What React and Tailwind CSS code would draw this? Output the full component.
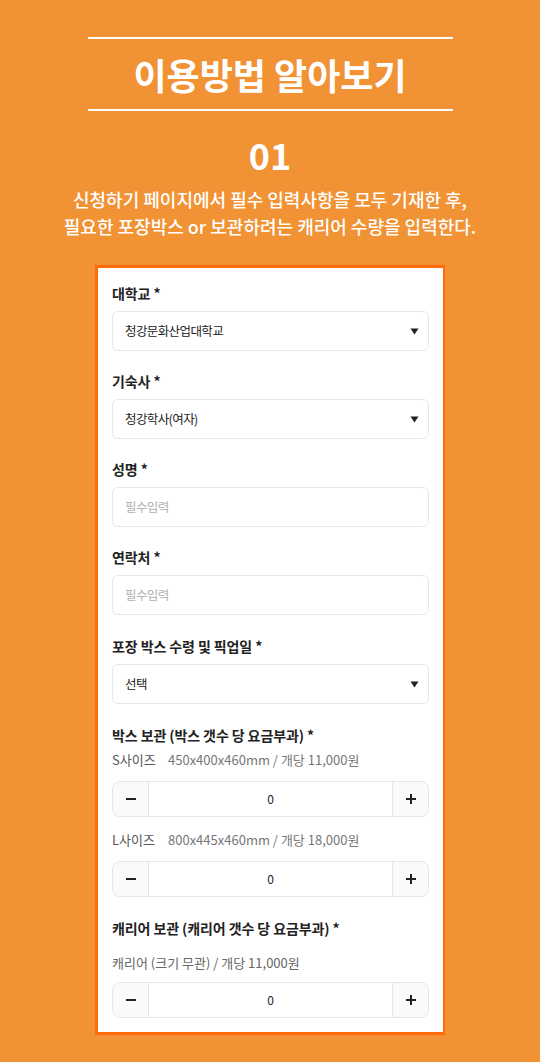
import React from "react";

const Caret = () => (
  <svg width="9" height="7" viewBox="0 0 9 7" className="shrink-0">
    <path d="M0.5 0.5 H8.5 L4.5 6.5 Z" fill="#222" />
  </svg>
);

const Label = ({ children }) => (
  <div className="text-[14px] leading-[20px] font-bold text-[#222] tracking-[-0.1px]">{children}</div>
);

const Select = ({ value }) => (
  <div className="mt-[8px] h-[40px] flex items-center justify-between pl-[12px] pr-[9px] border border-[#e6e6e6] rounded-[6px] bg-white">
    <span className="text-[12.5px] text-[#222] tracking-[-0.6px]">{value}</span>
    <Caret />
  </div>
);

const Input = () => (
  <div className="mt-[8px] h-[40px] flex items-center pl-[12px] border border-[#e6e6e6] rounded-[6px] bg-white">
    <span className="text-[12.5px] text-[#b0b0b0] tracking-[-0.6px]">필수입력</span>
  </div>
);

const Stepper = () => (
  <div className="h-[36px] flex border border-[#e6e6e6] rounded-[8px] overflow-hidden bg-white">
    <div className="w-[36px] bg-[#fafafa] border-r border-[#e6e6e6] flex items-center justify-center">
      <svg width="12" height="12" viewBox="0 0 12 12">
        <path d="M1 6 H11" stroke="#222" strokeWidth="2" />
      </svg>
    </div>
    <div className="flex-1 flex items-center justify-center text-[12px] text-[#222]">0</div>
    <div className="w-[36px] bg-[#fafafa] border-l border-[#e6e6e6] flex items-center justify-center">
      <svg width="12" height="12" viewBox="0 0 12 12">
        <path d="M1 6 H11 M6 1 V11" stroke="#222" strokeWidth="2" />
      </svg>
    </div>
  </div>
);

export default function App() {
  return (
    <div className="min-h-[1062px] bg-[#f19235] pt-[37px] pb-[28px] font-['Noto_Sans_CJK_KR','Noto_Sans',sans-serif]">
      <div className="mx-auto w-[365px] h-[2px] bg-white" />
      <h1 className="text-center text-white text-[36px] leading-[70px] font-bold">이용방법 알아보기</h1>
      <div className="mx-auto w-[365px] h-[2px] bg-white" />
      <div className="mt-[23px] text-center text-white text-[36px] leading-[40px] font-bold">01</div>
      <div className="mt-[12px] text-center text-white text-[18px] leading-[27px] font-medium">
        신청하기 페이지에서 필수 입력사항을 모두 기재한 후,
        <br />
        필요한 포장박스 or 보관하려는 캐리어 수량을 입력한다.
      </div>
      <div className="mx-auto mt-[25px] w-[350px] border-[3px] border-r-[2px] border-[#ff6a0a] bg-white px-[14px] pt-[15px] pb-[14px]">
        <Label>대학교 *</Label>
        <Select value="청강문화산업대학교" />
        <div className="mt-[20px]" />
        <Label>기숙사 *</Label>
        <Select value="청강학사(여자)" />
        <div className="mt-[20px]" />
        <Label>성명 *</Label>
        <Input />
        <div className="mt-[20px]" />
        <Label>연락처 *</Label>
        <Input />
        <div className="mt-[21px]" />
        <Label>포장 박스 수령 및 픽업일 *</Label>
        <Select value="선택" />
        <div className="mt-[21px]" />
        <Label>박스 보관 (박스 갯수 당 요금부과) *</Label>
        <div className="mt-[6px] flex text-[13px] leading-[18px]">
          <span className="text-[#555] w-[56px]">S사이즈</span>
          <span className="text-[#777]">450x400x460mm / 개당 11,000원</span>
        </div>
        <div className="mt-[12px]" />
        <Stepper />
        <div className="mt-[14px] flex text-[13px] leading-[18px]">
          <span className="text-[#555] w-[56px]">L사이즈</span>
          <span className="text-[#777]">800x445x460mm / 개당 18,000원</span>
        </div>
        <div className="mt-[12px]" />
        <Stepper />
        <div className="mt-[21px]" />
        <Label>캐리어 보관 (캐리어 갯수 당 요금부과) *</Label>
        <div className="mt-[16px] text-[13px] leading-[18px] text-[#666]">
          캐리어 (크기 무관) / 개당 11,000원
        </div>
        <div className="mt-[10px]" />
        <Stepper />
      </div>
    </div>
  );
}
